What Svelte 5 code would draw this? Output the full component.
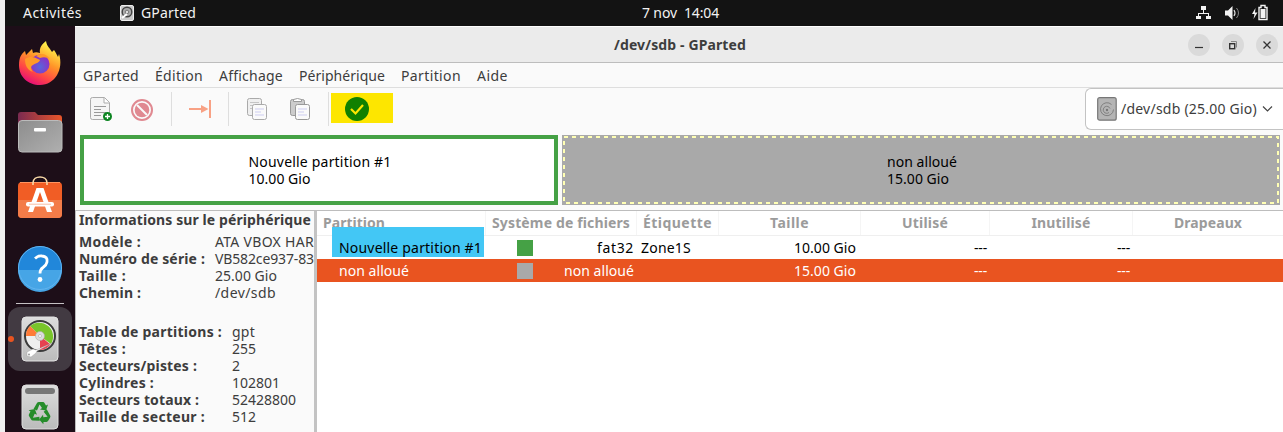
<script>
  // Spreads the letters so that a label takes the given width.
  function fit(node, width) {
    const natural = node.getBoundingClientRect().width;
    const gaps = node.textContent.length;
    node.style.letterSpacing = `${(width - natural) / gaps}px`;
  }

  const menus = [
    ['GParted', 56], ['Édition', 48], ['Affichage', 64],
    ['Périphérique', 86], ['Partition', 60], ['Aide', 31]
  ];
  const device = [
    ['Modèle :', 62, 'ATA VBOX HAR', 99],
    ['Numéro de série :', 126, 'VB582ce937-83', 99],
    ['Taille :', 47, '25.00 Gio', 62],
    ['Chemin :', 62, '/dev/sdb', 61]
  ];
  const geometry = [
    ['Table de partitions :', 143, 'gpt', 23],
    ['Têtes :', 47, '255', 24],
    ['Secteurs/pistes :', 118, '2', 8],
    ['Cylindres :', 75, '102801', 48],
    ['Secteurs totaux :', 120, '52428800', 64],
    ['Taille de secteur :', 126, '512', 24]
  ];
  const columns = [
    ['Partition', 62], ['Système de fichiers', 138], ['Étiquette', 69], ['Taille', 39],
    ['Utilisé', 46], ['Inutilisé', 59], ['Drapeaux', 68]
  ];
  const rows = [
    { name: 'Nouvelle partition #1', nw: 143, fs: 'fat32', fw: 37, kind: 'fat', label: 'Zone1S', size: '10.00 Gio' },
    { name: 'non alloué', nw: 70, fs: 'non alloué', fw: 70, kind: 'free', label: '', size: '15.00 Gio', selected: true }
  ];
</script>

<div class="screen">
  <header class="topbar">
    <span class="activities" use:fit={59}>Activités</span>
    <svg class="appicon" width="14" height="17" viewBox="0 0 14 17"><rect x=".5" y=".5" width="13" height="15" rx="1.5" fill="#c9c9c9" stroke="#eee"/><circle cx="7" cy="7" r="4.8" fill="#aaa" stroke="#444" stroke-width="1.4"/><circle cx="7" cy="7" r="1.8" fill="#ddd" stroke="#777"/><path d="M2 13l5-4" stroke="#fff" stroke-width="2"/></svg>
    <span use:fit={55}>GParted</span>
    <span class="clock" use:fit={77}>7 nov&nbsp; 14:04</span>
    <svg class="tray" width="74" height="18" viewBox="1195 3 74 18" fill="#f2f2f2">
      <path d="M1201 5h5v4h-2v3h5v3h2v3h-5v-3h2v-2h-9v2h2v3h-5v-3h2v-3h5V9h-2z"/>
      <path d="M1225 9.500h3l4.500-4.500v14l-4.500-4.500h-3z"/>
      <path d="M1234 9q2 3 0 6" fill="none" stroke="#ddd" stroke-width="1.200"/><path d="M1236.500 7q4 5 0 10" fill="none" stroke="#888"/>
      <path d="M1255.500 7l-3.500 6h2.500l-1 5 4-6.500h-2.500z"/><path d="M1259 6.500h2v-2h4v2h2v12h-8z" fill="none" stroke="#f2f2f2" stroke-width="1.400"/><rect x="1260.500" y="8" width="5" height="9"/>
    </svg>
  </header>

  <div class="body">
    <nav class="dock">
      <svg width="70" height="406" viewBox="5 26 70 406">
        <defs>
          <linearGradient id="fox" x1=".8" y1="0" x2=".3" y2="1"><stop offset=".1" stop-color="#fff04a"/><stop offset=".45" stop-color="#ff9528"/><stop offset=".75" stop-color="#ff4546"/><stop offset="1" stop-color="#e40b7a"/></linearGradient>
          <radialGradient id="globe" cx=".5" cy=".65"><stop stop-color="#5766dc"/><stop offset="1" stop-color="#8a35c5"/></radialGradient>
          <linearGradient id="grey" x1="0" y1="0" x2="1" y2="1"><stop stop-color="#8d8d8d"/><stop offset="1" stop-color="#afafaf"/></linearGradient>
          <linearGradient id="folder"><stop stop-color="#7a2a50"/><stop offset="1" stop-color="#e9562a"/></linearGradient>
          <linearGradient id="metal" x1="0" y1="0" x2="0" y2="1"><stop stop-color="#ddd"/><stop offset="1" stop-color="#bbb"/></linearGradient>
        </defs>
        <path d="M19 65c0-7 2-11 6-14l1 4 6-6 1 4c2-1 4-1 7 0-1-5 2-9 6-12 1 6 4 7 6 11l2-2c2 3 3 5 4 7l1-3c5 15-4 31-19 31-12 0-21-8-21-20z" fill="url(#fox)"/>
        <circle cx="40" cy="64" r="9.500" fill="url(#globe)"/>
        <path d="M25 59c5-3 9-2 13 0l2 1c-1 3-4 3-7 5-3 1-2 5 0 7-6-2-8-7-8-13zM36 56q8-5 14 3-5-3-10-1z" fill="#ff9a28"/>

        <path d="M18 122v-7q0-3 3-3h14l3 3h21q3 0 3 3v9H18z" fill="url(#folder)"/>
        <rect x="18.500" y="120.500" width="43.500" height="31.500" rx="3.500" fill="url(#grey)" stroke="#bbb"/>
        <rect x="34" y="128" width="12" height="3.500" rx="1" fill="#fff"/>

        <rect x="18" y="182" width="44" height="36" rx="4" fill="#f15d25"/><path d="M18 200h44v14q0 4-4 4H22q-4 0-4-4z" fill="#f37c49"/><path d="M20 182.500h40" stroke="#ff9460"/>
        <path d="M33 185v-2c0-8 14-8 14 0v2" fill="none" stroke="#f8d9a7" stroke-width="1.600"/>
        <path d="M28 212l8.500-24h7L52 212h-5l-7-20-7 20z" fill="#fff"/><rect x="26" y="202" width="28" height="4.500" rx="2" fill="#fff"/><path d="M29 204.200h22" stroke="#f5a27c" stroke-width=".7"/>

        <circle cx="40" cy="268" r="22" fill="#2187da"/><path d="M18 270h44a22 22 0 0 1-44 0z" fill="#46a5e6"/><circle cx="40" cy="268" r="21.500" fill="none" stroke="#62b4ef"/>
        <path d="M35 258.500q3-3 7-2.500 6 .500 5 6-.500 3-4 5.500-3 2-3 6" fill="none" stroke="#fff" stroke-width="2.800"/><circle cx="40" cy="279.500" r="2.400" fill="#fff"/>
        <path d="M16 303.500h48" stroke="#c6c2c5"/>

        <rect x="8" y="307" width="64" height="64" rx="12" fill="#423a42"/><circle cx="11" cy="339" r="3" fill="#e95420"/>
        <rect x="22" y="317" width="36" height="44" rx="4" fill="url(#metal)" stroke="#e2e2e2"/>
        <circle cx="40" cy="336" r="15" fill="#eee" stroke="#3b3b3b" stroke-width="2"/>
        <path d="M40 336L30 326a14 14 0 0 1 21 18z" fill="#79c52a"/><path d="M40 336H26a14 14 0 0 1 4-10z" fill="#ff7b37"/><path d="M40 336l10.500 8.500q-4 5-10.500 5.500z" fill="#e74150"/>
        <circle cx="40" cy="336" r="4.500" fill="#ddd" stroke="#aaa" stroke-width=".6"/><circle cx="40" cy="336" r="1.500" fill="#fff" stroke="#999" stroke-width=".5"/>
        <path d="M52 343L36 350l-3-1-6 3v4l4 1 5-4 1-2z" fill="#fff" stroke="#999" stroke-width=".4"/><circle cx="29" cy="354.500" r="1" fill="#999"/>

        <rect x="22" y="385" width="36" height="44" rx="4" fill="url(#metal)" stroke="#ddd"/><rect x="25" y="388" width="30" height="6" rx="3" fill="#777"/>
        <g fill="#258c2a"><path id="arrow" d="M33.500 409l3.500-6q.500-1 2-1h4q1 0 1.500 1l1.500 2.500 2-1-2 6-6-1 2-1.500-2.500-3.500-2.500 6z"/><use href="#arrow" transform="rotate(120 40 413)"/><use href="#arrow" transform="rotate(240 40 413)"/></g>
      </svg>
    </nav>

    <main class="window">
      <div class="titlebar">
        <b class="title" use:fit={132}>/dev/sdb - GParted</b>
        <div class="controls">
          <i><svg width="22" height="22"><path d="M7 13.500h8" stroke="#333" stroke-width="1.200"/></svg></i>
          <i><svg width="22" height="22" fill="none"><rect x="7.700" y="9.700" width="5" height="5" stroke="#333" stroke-width="1.400"/><path d="M9 7.500h5.500v6" stroke="#888"/></svg></i>
          <i><svg width="22" height="22"><path d="M7.500 7.500l7 7m0-7l-7 7" stroke="#333" stroke-width="1.300"/></svg></i>
        </div>
      </div>
      <div class="menubar">
        {#each menus as [name, w]}<span use:fit={w}>{name}</span>{/each}
      </div>
      <div class="toolbar">
        <svg class="tools" width="320" height="46" viewBox="75 88 320 46" fill="none">
          <path d="M92.500 97.500h12l5 5v15q0 2-2 2h-15q-2 0-2-2v-18q0-2 2-2z" fill="#f5f5f5" stroke="#ababab"/><path d="M104 98v5h5.500" fill="#fff" stroke="#ababab"/><path d="M94 106.500h12M94 109.500h7M94 112.500h12M94 115.500h7" stroke="#999"/><circle cx="107.500" cy="116.500" r="4.500" fill="#0b8420"/><path d="M105 116.500h5m-2.500-2.500v5" stroke="#fff" stroke-width="1.300"/>
          <circle cx="142" cy="110" r="10" stroke="#e08991" stroke-width="2"/><circle cx="142" cy="110" r="7.300" fill="#e08991"/><path d="M137 105l10 10" stroke="#fafafa" stroke-width="2"/>
          <path d="M171.500 92v34M228.500 92v34M328.500 92v34" stroke="#dedede"/>
          <path d="M189 109h14M210 100v18" stroke="#f8a184" stroke-width="2"/><path d="M201 105l7.500 4-7.500 4z" fill="#f8a184"/>
          <g stroke="#aaa"><rect x="247.500" y="98.500" width="14" height="17" rx="2" fill="#efefef"/><path d="M250 102.500h9M250 105.500h6M250 108.500h4" stroke="#c5c5c5"/><rect x="252.500" y="104.500" width="14" height="15" rx="2" fill="#fafafa"/></g><path d="M255 109h9M255 112h6M255 115h9" stroke="#cdcdf0"/>
          <g stroke="#999"><rect x="290.500" y="99.500" width="14" height="16" rx="2" fill="#ccc"/><path d="M293.500 101.500v-2q4-2 8 0v2z" fill="#fff"/><rect x="295.500" y="104.500" width="14" height="15" rx="2" fill="#fafafa"/></g><path d="M298 109h9M298 112h6M298 115h9" stroke="#cdcdf0"/>
          <path d="M331 93h62v30h-62z" fill="#fde600"/><circle cx="357" cy="109" r="12" fill="#108000"/><path d="M351 109l4.500 4.500L363 105" stroke="#fde600" stroke-width="2.200"/>
        </svg>
        <div class="device">
          <svg width="20" height="24" fill="none"><rect x=".7" y=".7" width="18.500" height="22.500" rx="2" fill="#b5b5b5" stroke="#777" stroke-width="1.200"/><path d="M14.500 7.500a6.500 6.500 0 1 0 2 5M13 11.500a3.500 3.500 0 1 0-1 4" stroke="#808080"/><circle cx="10" cy="13" r="1.200" fill="#777"/></svg>
          <span use:fit={136}>/dev/sdb (25.00 Gio)</span>
          <svg width="12" height="8" fill="none"><path d="M1 1.500l4.500 4.500L10 1.500" stroke="#444" stroke-width="1.200"/></svg>
        </div>
      </div>

      <div class="diskmap">
        <div class="part new"><div><span use:fit={143}>Nouvelle partition #1</span><br><span use:fit={62}>10.00 Gio</span></div></div>
        <div class="part free">
          <svg class="ants" width="718" height="70"><rect x="2" y="2" width="714" height="66" fill="none" stroke="#ffffb4" stroke-width="2" stroke-dasharray="4 4"/></svg>
          <div><span use:fit={70}>non alloué</span><br><span use:fit={62}>15.00 Gio</span></div>
        </div>
      </div>

      <div class="panes">
        <aside class="info">
          <b class="heading" use:fit={232}>Informations sur le périphérique</b>
          <dl class="short">{#each device as [k, kw, v, vw]}<dt><span use:fit={kw}>{k}</span></dt><dd><span use:fit={vw}>{v}</span></dd>{/each}</dl>
          <dl class="long">{#each geometry as [k, kw, v, vw]}<dt><span use:fit={kw}>{k}</span></dt><dd><span use:fit={vw}>{v}</span></dd>{/each}</dl>
        </aside>
        <section class="table">
          <div class="row head">{#each columns as [c, w]}<div><span use:fit={w}>{c}</span></div>{/each}</div>
          <div class="mark"></div>
          {#each rows as r}
            <div class="row" class:selected={r.selected}>
              <div class="name"><span use:fit={r.nw}>{r.name}</span></div>
              <div class="fs"><i class={r.kind}></i><span use:fit={r.fw}>{r.fs}</span></div>
              <div class="label">{#if r.label}<span use:fit={50}>{r.label}</span>{/if}</div>
              <div class="num"><span use:fit={62}>{r.size}</span></div>
              <div class="num dash"><span use:fit={13}>---</span></div>
              <div class="num dash"><span use:fit={13}>---</span></div>
              <div></div>
            </div>
          {/each}
        </section>
      </div>
    </main>
  </div>
</div>

<style>
  :global(body) { margin: 0; overflow: hidden; }
  .screen { box-sizing: border-box; width: 1283px; height: 432px; padding-left: 5px; overflow: hidden; background: #f0f0f0; font: 14px/18px "Noto Sans", sans-serif; color: #3d3d3d; white-space: nowrap; }
  span, b { display: inline-block; white-space: pre; }
  svg { display: block; flex: none; }
  .topbar { height: 26px; background: #131313; color: #f2f2f2; display: flex; align-items: center; padding-left: 18px; }
  .appicon { margin: 0 7px 0 38px; }
  .clock { margin-left: 446px; }
  .tray { margin-left: auto; margin-right: 14px; }
  .body { display: flex; height: 406px; }
  .dock { width: 70px; background: #1d0e18; flex: none; }
  .window { width: 1208px; background: #fafafa; }
  .titlebar { box-sizing: border-box; height: 37px; border-top: 1px solid #fff; border-bottom: 1px solid #bdbdbd; background: #ebebeb; display: flex; align-items: center; padding-left: 539px; }
  .controls { display: flex; gap: 12px; margin-left: auto; padding-right: 5px; }
  .controls i { width: 22px; height: 22px; border-radius: 50%; background: #dadada; }
  .menubar { box-sizing: border-box; height: 25px; padding: 4px 8px 2px; display: flex; gap: 16px; border-bottom: 1px solid #dedede; }
  .toolbar { height: 47px; display: flex; justify-content: space-between; }
  .device { box-sizing: border-box; width: 198px; height: 42px; border: 1px solid #c3c3c3; border-right: 0; border-radius: 6px 0 0 6px; background: #fff; display: flex; align-items: center; padding-left: 11px; gap: 4px; }
  .device span + svg { margin-left: 1px; }
  .diskmap { display: flex; gap: 4px; padding-left: 5px; height: 75px; color: #000; line-height: 17px; }
  .part { box-sizing: border-box; height: 70px; display: flex; align-items: center; justify-content: center; padding-left: 2px; }
  .new { width: 478px; border: 4px solid #45a145; background: #fff; }
  .free { width: 718px; background: #a9a9a9; position: relative; }
  .ants { position: absolute; inset: 0; }
  .panes { display: flex; height: 222px; border-top: 1px solid #bdbdbd; }
  .info { box-sizing: border-box; width: 242px; overflow: hidden; border-left: 1px solid #bdbdbd; border-right: 3px solid #c3c3c3; padding-left: 3px; line-height: 17px; }
  .heading { height: 17px; display: block; width: max-content; }
  dl { display: grid; margin: 5px 0 0; grid-auto-rows: 17px; }
  .short { grid-template-columns: 136px auto; }
  .long { grid-template-columns: 153px auto; margin-top: 22px; }
  dt { font-weight: bold; }
  dd { margin: 0; }
  .table { flex: 1; background: #fff; position: relative; }
  .row { display: grid; grid-template-columns: 169px 151px 82px 142px 129px 143px 1fr; height: 23px; color: #000; position: relative; align-items: center; }
  .head { height: 25px; box-sizing: border-box; border-bottom: 1px solid #efefef; color: #9b9b9b; font-weight: bold; }
  .head div { height: 24px; line-height: 24px; box-sizing: border-box; border-right: 1px solid #f5f5f5; text-align: center; }
  .head div:first-child { text-align: left; padding-left: 6px; }
  .head div:last-child { border-right: 0; }
  .mark { position: absolute; left: 15px; top: 16px; width: 152px; height: 30px; background: #43c7f5; }
  .name { padding-left: 22px; }
  .fs { display: flex; align-items: center; justify-content: space-between; padding: 0 3px 0 31px; }
  .fs i { width: 16px; height: 16px; }
  .fat { background: #45a145; }
  .row .free { background: #a9a9a9; }
  .label { padding-left: 4px; }
  .num { text-align: right; padding-right: 5px; }
  .dash { padding-right: 3px; }
  .selected { background: #e95420; color: #fff; }
</style>
